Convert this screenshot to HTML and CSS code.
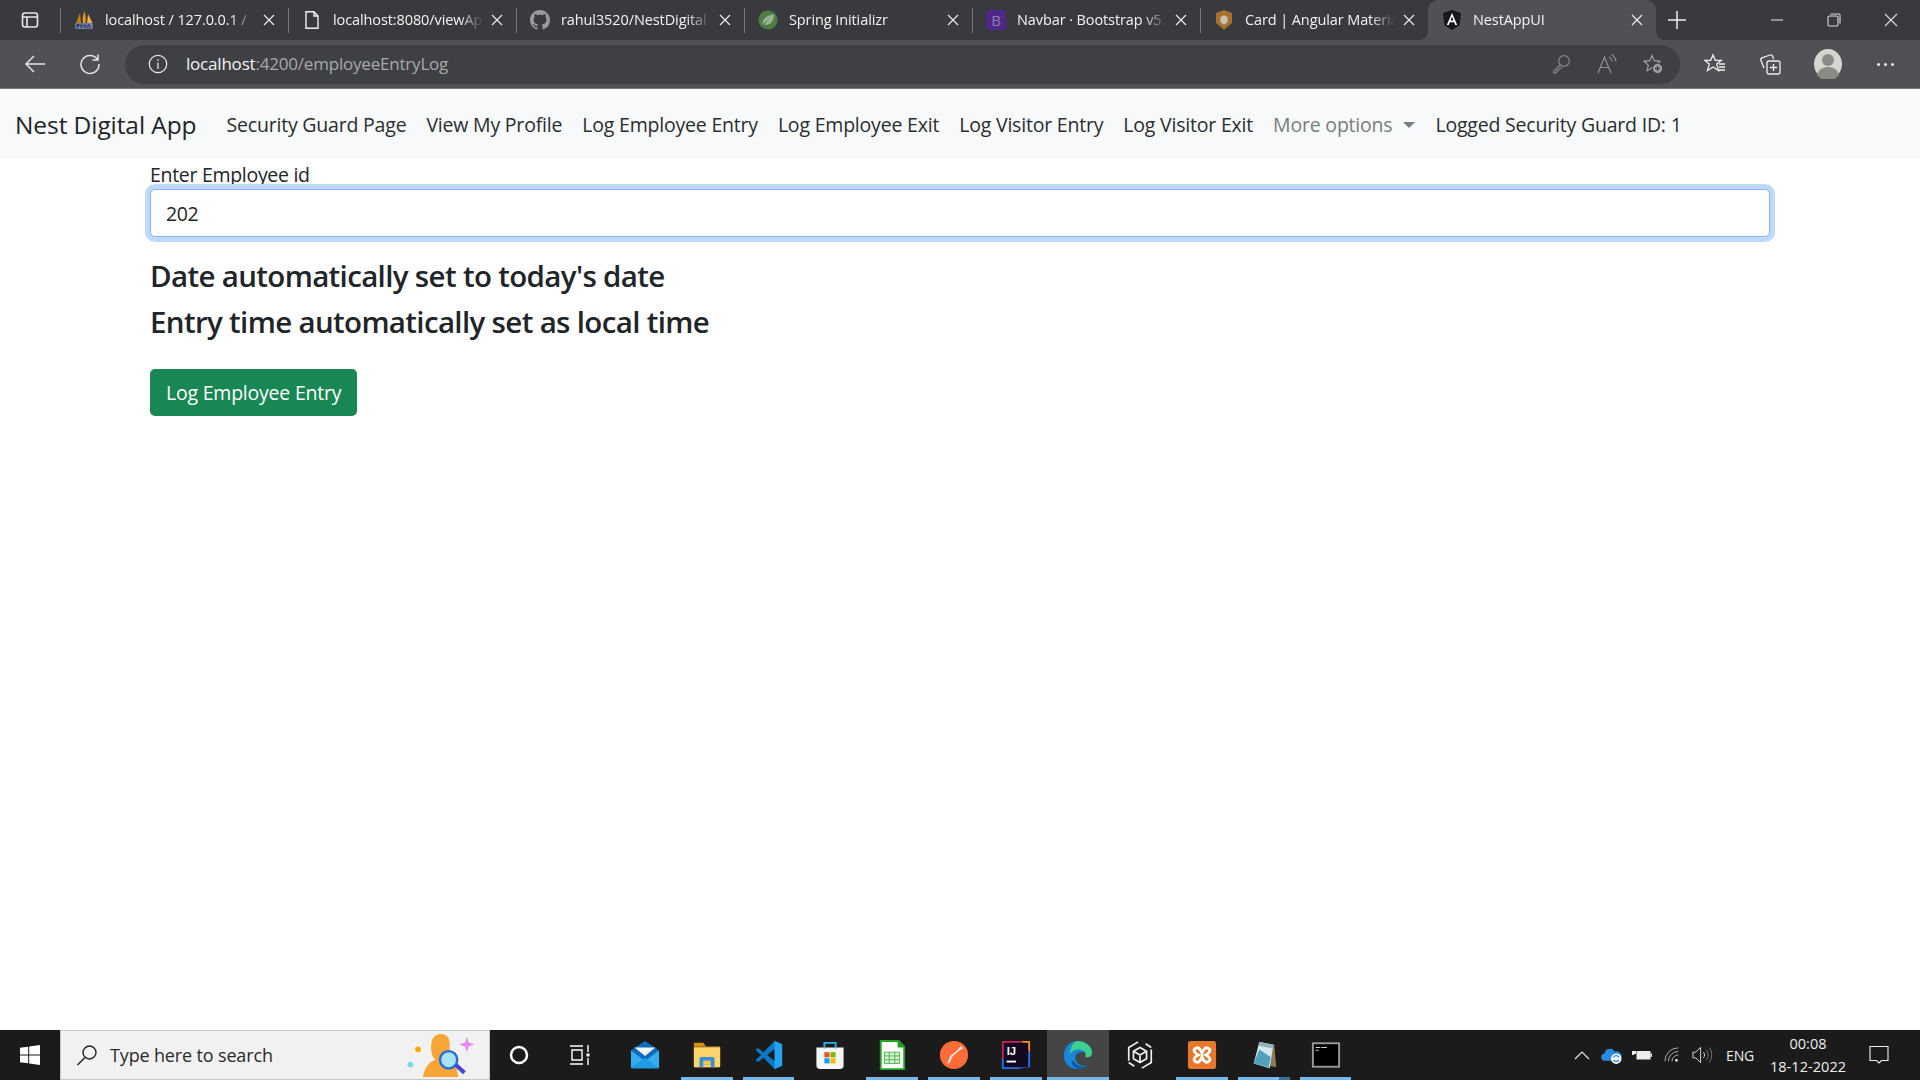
FILE: index.html
```html
<!DOCTYPE html>
<html lang="en">
<head>
<meta charset="utf-8">
<title>NestAppUI</title>
<link rel="stylesheet" href="styles.css">
</head>
<body>
<div class="screen">
  <header class="tabstrip">
    <div class="strip-start">
      <svg class="ic20" viewBox="0 0 20 20" fill="none" stroke="#e8e8e8" stroke-width="1.6"><rect x="2.5" y="3" width="15" height="14" rx="2.5"/><path d="M2.5 7h15M7 7v10"/></svg>
    </div>
    <div class="tab sep">
      <svg class="fav" viewBox="0 0 20 20"><path d="M2 13 6 3l1 10z" fill="#c77d18"/><path d="M7 13 10.500 1 13 13z" fill="#e89a2a"/><path d="M13 13 14 4l4.500 9z" fill="#f2b04a"/><path d="M8 5l1 8H7zM12 4l1 9h-1.500z" fill="#3b3226"/><rect x="1" y="13" width="18" height="6" rx="1" fill="#6c77a3"/><path d="M3 18v-3.500h2V16H3M7 18v-3.500l2 2 2-2V18M13 18l1.500-3.500L16 18" fill="none" stroke="#2d3358" stroke-width="1"/></svg>
      <span class="tab-title">localhost / 127.0.0.1 /</span>
      <svg class="tab-x" viewBox="0 0 12 12"><path d="M1 1l10 10M11 1 1 11"/></svg>
    </div>
    <div class="tab sep">
      <svg class="fav" viewBox="0 0 20 20" fill="none" stroke="#f0f0f0" stroke-width="1.4"><path d="M4 1.700h8l4 4.300v12.300H4zM12 1.700V6h4"/></svg>
      <span class="tab-title">localhost:8080/viewAp</span>
      <svg class="tab-x" viewBox="0 0 12 12"><path d="M1 1l10 10M11 1 1 11"/></svg>
    </div>
    <div class="tab sep">
      <svg class="fav" viewBox="0 0 16 16"><path fill="#9a9a9c" d="M8 0C3.580 0 0 3.580 0 8c0 3.540 2.290 6.530 5.470 7.590.4.070.55-.17.55-.38 0-.19-.01-.82-.01-1.490-2.010.37-2.530-.49-2.690-.94-.09-.23-.48-.94-.82-1.130-.28-.15-.68-.52-.01-.53.63-.01 1.080.58 1.230.82.72 1.210 1.870.87 2.330.66.07-.52.28-.87.51-1.070-1.780-.2-3.640-.89-3.640-3.950 0-.87.31-1.590.82-2.150-.08-.2-.36-1.020.08-2.120 0 0 .67-.21 2.200.82.64-.18 1.320-.27 2-.27s1.360.09 2 .27c1.530-1.040 2.200-.82 2.200-.82.44 1.100.16 1.920.08 2.120.51.56.82 1.270.82 2.150 0 3.070-1.870 3.750-3.650 3.950.29.25.54.73.54 1.480 0 1.070-.01 1.930-.01 2.200 0 .21.15.46.55.38A8.010 8.010 0 0 0 16 8c0-4.420-3.580-8-8-8z"/></svg>
      <span class="tab-title">rahul3520/NestDigital</span>
      <svg class="tab-x" viewBox="0 0 12 12"><path d="M1 1l10 10M11 1 1 11"/></svg>
    </div>
    <div class="tab sep">
      <svg class="fav" viewBox="0 0 20 20"><circle cx="10" cy="10" r="9.500" fill="#4f7d45"/><path d="M4.500 15C4 8 10 5 16 4.500c0 7-4 11-9.500 10.500 1-3 3-5 6-6.500-3 1-5.500 3-8 6.500z" fill="#98b592"/></svg>
      <span class="tab-title">Spring Initializr</span>
      <svg class="tab-x" viewBox="0 0 12 12"><path d="M1 1l10 10M11 1 1 11"/></svg>
    </div>
    <div class="tab sep">
      <span class="fav-b">B</span>
      <span class="tab-title">Navbar · Bootstrap v5.</span>
      <svg class="tab-x" viewBox="0 0 12 12"><path d="M1 1l10 10M11 1 1 11"/></svg>
    </div>
    <div class="tab sep">
      <svg class="fav" viewBox="0 0 20 20"><path d="M10 0l8 3v10l-8 7-8-7V3z" fill="#a8702c"/><path d="M10 5l3.500 2v5L10 15l-3.500-3V7z" fill="#c9c2b4"/></svg>
      <span class="tab-title">Card | Angular Materia</span>
      <svg class="tab-x" viewBox="0 0 12 12"><path d="M1 1l10 10M11 1 1 11"/></svg>
    </div>
    <div class="tab active">
      <svg class="fav" viewBox="0 0 20 20"><path d="M10 0l9 3-1.400 12L10 20l-7.600-5L1 3z" fill="#16171b"/><path d="M10 3 4.800 15h2l1-2.700h4.400l1 2.700h2zM8.500 10.600 10 6.800l1.500 3.800z" fill="#fff"/></svg>
      <span class="tab-title">NestAppUI</span>
      <svg class="tab-x" viewBox="0 0 12 12"><path d="M1 1l10 10M11 1 1 11"/></svg>
    </div>
    <button class="new-tab"><svg class="ic20" viewBox="0 0 20 20" stroke="#eee" stroke-width="1.500"><path d="M10 1v18M1 10h18"/></svg></button>
    <div class="win-controls">
      <svg class="ic14" viewBox="0 0 14 14" stroke="#ddd" stroke-width="1.100" fill="none"><path d="M1 7h12"/></svg>
      <svg class="ic14" viewBox="0 0 14 14" stroke="#ddd" stroke-width="1.100" fill="none"><rect x="1" y="3" width="10" height="10" rx="1.500"/><path d="M3.500 1H12a1 1 0 0 1 1 1v8.500"/></svg>
      <svg class="ic14" viewBox="0 0 14 14" stroke="#ddd" stroke-width="1.100" fill="none"><path d="M1 1l12 12M13 1 1 13"/></svg>
    </div>
  </header>

  <div class="toolbar">
    <svg class="tool-back" viewBox="0 0 22 22" fill="none" stroke="#e6e6e6" stroke-width="1.500"><path d="M21 11H2M10 3l-8 8 8 8"/></svg>
    <svg class="tool-reload" viewBox="0 0 22 22" fill="none" stroke="#e6e6e6" stroke-width="1.500"><path d="M18.500 6.500A9 9 0 1 0 20 11M19 1.500v5.500h-5.500"/></svg>
    <div class="omnibox">
      <svg class="omni-info" viewBox="0 0 20 20" fill="none" stroke="#e8e8e8" stroke-width="1.200"><circle cx="10" cy="10" r="8.700"/><path d="M10 8.500V15M10 5v1.800"/></svg>
      <span class="url"><span class="url-host">localhost</span>:4200/employeeEntryLog</span>
      <div class="omni-actions">
        <svg class="ic20" viewBox="0 0 20 20" fill="none" stroke="#85868a" stroke-width="1.200"><circle cx="13" cy="7" r="5.300"/><path d="M9.300 10.800 2.500 17.500v1.300h2.800l.4-2 2-.4.4-2 2-.4.7-.8M13.500 5.500h.1"/></svg>
        <svg class="ic20" viewBox="0 0 20 20" fill="none" stroke="#909195" stroke-width="1.200"><path d="M1 19 7.500 3 14 19M3.300 13.500h8.400M12 3c1.800.9 2.800 2.500 3.200 4.500M14.500 .5c2.800 1.500 4 4 4.500 7"/></svg>
        <svg class="ic20" viewBox="0 0 20 20" fill="none" stroke="#a0a1a5" stroke-width="1.200"><path d="M9 1.500l2.300 5.200 5.700.6-4.300 3.800 1.300 5.600-5-2.900-5 2.900 1.300-5.600L1 7.300l5.700-.6z"/><circle cx="14.500" cy="14.500" r="5" fill="#a0a1a5" stroke="#3f4044" stroke-width="1"/><path d="M14.500 12v5M12 14.500h5" stroke="#3f4044" stroke-width="1.400"/></svg>
      </div>
    </div>
    <div class="tool-right">
      <svg class="ic22" viewBox="0 0 22 22" fill="none" stroke="#f0f0f0" stroke-width="1.300"><path d="M9 2l2.300 5.300h6l-4.600 3.800 1.800 6.400L9 14l-5.500 3.500 1.800-6.400L.7 7.300h6zM15 11h6M15 14h6M15 17h6"/></svg>
      <svg class="ic22" viewBox="0 0 22 22" fill="none" stroke="#f0f0f0" stroke-width="1.300"><rect x="8" y="8" width="13" height="13" rx="2"/><path d="M14.500 11v7M11 14.500h7M5 15 2 7.500a2 2 0 0 1 1.100-2.600L11 2a2 2 0 0 1 2.500 1l1 3"/></svg>
      <span class="avatar"><svg viewBox="0 0 28 30"><ellipse cx="14" cy="15" rx="14" ry="15" fill="#d7d5d0"/><circle cx="14" cy="11" r="6" fill="#8b8a86"/><path d="M3 26c2-6 6-8 11-8s9 2 11 8a14 15 0 0 1-22 0z" fill="#8b8a86"/></svg></span>
      <span class="dots"><i></i><i></i><i></i></span>
    </div>
  </div>

  <nav class="navbar">
    <a class="brand">Nest Digital App</a>
    <a class="nav-link">Security Guard Page</a>
    <a class="nav-link">View My Profile</a>
    <a class="nav-link">Log Employee Entry</a>
    <a class="nav-link">Log Employee Exit</a>
    <a class="nav-link">Log Visitor Entry</a>
    <a class="nav-link">Log Visitor Exit</a>
    <a class="nav-link muted">More options<span class="caret"></span></a>
    <a class="nav-link">Logged Security Guard ID: 1</a>
  </nav>

  <main class="content">
    <label class="field-label" for="emp">Enter Employee id</label>
    <input class="field" id="emp" type="text" value="202">
    <h4 class="note first">Date automatically set to today's date</h4>
    <h4 class="note">Entry time automatically set as local time</h4>
    <button class="btn-success">Log Employee Entry</button>
  </main>

  <footer class="taskbar">
    <div class="start"><svg viewBox="0 0 20 20" width="20" height="20" fill="#fff"><path d="M0 2.800 8.200 1.700v7.700H0zM9.200 1.500 20 0v9.400H9.200zM0 10.400h8.200v7.900L0 17.200zM9.200 10.400H20V20L9.200 18.500z"/></svg></div>
    <div class="search">
      <svg class="search-ic" viewBox="0 0 22 22" fill="none" stroke="#222" stroke-width="1.400"><circle cx="13.500" cy="8.500" r="6.500"/><path d="M9 13.500 1.500 21"/></svg>
      <span class="search-text">Type here to search</span>
      <svg class="search-art" viewBox="0 0 70 46"><circle cx="11" cy="17" r="3" fill="#ffa800"/><circle cx="3" cy="33" r="3" fill="#7ddbe8"/><path d="M60 10l2-6 2 6 6 2-6 2-2 6-2-6-6-2z" fill="#e58cf0"/><path d="M16 46c2-10 7-16 13-18-4-4-5-10-4-18 1-6 5-9 10-9s9 3 9 10v18c5 3 8 8 9 17z" fill="#f5a636"/><circle cx="43" cy="28" r="9" fill="#a5e4f5" stroke="#2b69d8" stroke-width="2.500"/><path d="M49 35l9 8 3-3-9-8z" fill="#4a45cf"/></svg>
    </div>
    <div class="tb-btn nudge-sm"><svg class="tb-ic" viewBox="0 0 24 24" fill="none" stroke="#fff" stroke-width="2.500"><circle cx="12" cy="12" r="8"/></svg></div>
    <div class="tb-btn nudge"><svg class="tb-ic" viewBox="0 0 24 24" fill="none" stroke="#fff" stroke-width="1.400"><path d="M2 3h13M2 21h13M4 7h10v10H4zM20 2v7M20 15v7"/><rect x="18.500" y="10.500" width="3" height="3" fill="#fff" stroke="none"/></svg></div>
    <div class="tb-btn"><svg class="tb-ic lg" viewBox="0 0 32 32"><path d="M1 11 16 1l15 10-15 11z" fill="#0f6cbd"/><path d="M5 8h22l-11 9z" fill="#f4f6f8"/><path d="M1 11v18a1 1 0 0 0 1 1h28a1 1 0 0 0 1-1V11L16 22z" fill="#35aef0"/><path d="M1 29 16 19l15 11H2z" fill="#1f9be6"/></svg></div>
    <div class="tb-btn on"><svg class="tb-ic lg" viewBox="0 0 32 32"><path d="M2 3h10l3 4h-13z" fill="#d9920f"/><path d="M2 7h28v21a1 1 0 0 1-1 1H3a1 1 0 0 1-1-1z" fill="#c79022"/><path d="M2 8h28v20a1 1 0 0 1-1 1H3a1 1 0 0 1-1-1z" fill="#fbd56c"/><path d="M8 29V20a2 2 0 0 1 2-2h12a2 2 0 0 1 2 2v9h-4v-3h-8v3z" fill="#3a8fd8"/><rect x="12" y="22" width="8" height="4" fill="#f5c94f"/></svg></div>
    <div class="tb-btn on"><svg class="tb-ic lg" viewBox="0 0 32 32"><path fill-rule="evenodd" d="M22 1 10 13 4.500 8.500 1.500 10.500 7.500 16l-6 5.500 3 2L10 19l12 12 8-3.500v-23zM22 9.500v13L14 16z" fill="#0b78c8"/><path fill-rule="evenodd" d="M22 1l8 3.500v23L22 31z" fill="#24a3ee"/></svg></div>
    <div class="tb-btn"><svg class="tb-ic lg" viewBox="0 0 32 32"><path d="M1.500 8h29v19a4 4 0 0 1-4 4h-21a4 4 0 0 1-4-4z" fill="#f5f5f5"/><path d="M10 9V3h12v6" fill="none" stroke="#2bb3ec" stroke-width="2"/><rect x="10" y="13" width="5.500" height="5.500" fill="#f25022"/><rect x="16.500" y="13" width="5.500" height="5.500" fill="#7fba00"/><rect x="10" y="19.500" width="5.500" height="5.500" fill="#00a4ef"/><rect x="16.500" y="19.500" width="5.500" height="5.500" fill="#ffb900"/></svg></div>
    <div class="tb-btn on"><svg class="tb-ic lg" viewBox="0 0 32 32"><path d="M4 1h19l6 6v24H4z" fill="#fff" stroke="#22a322" stroke-width="2"/><path d="M22 0l8 8h-8z" fill="#1f9e1f"/><path d="M8 13h16v12H8zM8 17h16M8 21h16M13 13v12M19 13v12" fill="#d8f0d8" stroke="#49b849" stroke-width="1"/></svg></div>
    <div class="tb-btn on"><svg class="tb-ic lg" viewBox="0 0 32 32"><circle cx="16" cy="16" r="15" fill="#ff6c37"/><path d="M23 6.500a2.200 2.200 0 0 1 2 3l-2.500 1-8 7-3 6.500-3 1.500 3.500-8.500 8-6.500z" fill="#fbe3d8"/></svg></div>
    <div class="tb-btn on"><svg class="tb-ic lg" viewBox="0 0 32 32"><path d="M1 1h20L31 8v10L20 31H1z" fill="#c5225d"/><path d="M1 20 1 31h12l18-2V12z" fill="#2371e8"/><path d="M22 1h9v12z" fill="#f58b2b"/><rect x="3" y="3" width="26" height="26" fill="#130a1f"/><text x="6" y="16" class="ij">IJ</text><rect x="6" y="22" width="10" height="2" fill="#fff"/></svg></div>
    <div class="tb-btn on cur"><svg class="tb-ic lg" viewBox="0 0 32 32"><path d="M16 1C7 1 1 8 1 16s5 15 14 15c5 0 9-2 11-4-4 1-10 0-12-5-2-4 0-9 5-9h12C31 7 24 1 16 1z" fill="#1687d9"/><path d="M16 1c8 0 15 6 15 13 0 4-4 5-7 4 1-4-1-8-7-8-5 0-8 2-10 5C8 7 11 1 16 1z" fill="#3ecf8e"/><path d="M12 23c2 5 8 7 14 4-6 6-16 4-17-5z" fill="#0b559f"/></svg></div>
    <div class="tb-btn"><svg class="tb-ic lg" viewBox="0 0 32 32" fill="none" stroke="#f0f0f0" stroke-width="1.800"><path d="M14 2 4 8v14M18 30l10-6V10M22 4l6 4M10 28l-6-4M16 8l7 4v8l-7 4-7-4v-8zM9 12l7 4 7-4M16 16v8"/></svg></div>
    <div class="tb-btn on"><svg class="tb-ic lg" viewBox="0 0 32 32"><rect x="1" y="1" width="30" height="30" rx="3" fill="#e8762b"/><path d="M9 9c3-2 5 0 7 5 2-5 4-7 7-5 3 2 1 5-3 7 4 2 6 5 3 7-3 2-5 0-7-5-2 5-4 7-7 5-3-2-1-5 3-7-4-2-6-5-3-7z" fill="none" stroke="#fff" stroke-width="3"/></svg></div>
    <div class="tb-btn on stacked"><svg class="tb-ic lg" viewBox="0 0 32 32"><path d="M11 2l16 3 2 24-6-1z" fill="#8c7a52"/><path d="M11 2l15 3-4 25-17-5z" fill="#d5e9ef"/><path d="M11 2l15 3-1 4-15-3z" fill="#95afb9"/><path d="M5 25 11 10l12 8-2 11z" fill="#4fa0b8"/></svg></div>
    <div class="tb-btn on"><svg class="tb-ic lg" viewBox="0 0 32 32"><rect x="2" y="3.500" width="28" height="25" fill="#000" stroke="#9a9a9a" stroke-width="2"/><path d="M5 8h5M11 8h6M5 11h3" stroke="#ddd" stroke-width="1"/></svg></div>
    <div class="tray">
      <svg class="tray-chev" viewBox="0 0 16 10" fill="none" stroke="#e8e8e8" stroke-width="1.200"><path d="M1 9l7-7 7 7"/></svg>
      <svg class="tray-cloud" viewBox="0 0 20 16"><path d="M4 13a3.500 3.500 0 0 1-.5-7A5 5 0 0 1 13 4.500 4 4 0 0 1 17 13z" fill="#2a8ae0"/><circle cx="14.500" cy="11" r="5" fill="#fff"/><path d="M12 10a2.600 2.600 0 0 1 5 0M17 12a2.600 2.600 0 0 1-5 0" stroke="#2a8ae0" stroke-width="1.300" fill="none"/></svg>
      <svg class="tray-batt" viewBox="0 0 20 12"><rect x="4.500" y="2" width="14" height="8.500" fill="#eee"/><rect x="18.500" y="4.500" width="1.500" height="3.500" fill="#eee"/><path d="M0 2h4v3H2v1H0z" fill="#eee"/></svg>
      <svg class="tray-wifi" viewBox="0 0 18 18" fill="none" stroke="#bbb" stroke-width="1"><path d="M1 16A15 15 0 0 1 16 1M5 16A11 11 0 0 1 16 5M9 16a7 7 0 0 1 7-7"/><circle cx="14" cy="15" r="1.500" fill="#eee" stroke="none"/></svg>
      <svg class="tray-vol" viewBox="0 0 22 20" fill="none" stroke="#ddd" stroke-width="1"><path d="M1 7h3l5-5v16l-5-5H1zM12 7c1.500 2 1.500 4 0 6"/><path d="M15 4.500c2.500 3 2.500 8 0 11M18 2c3.500 4.500 3.500 11.500 0 16" stroke="#777"/></svg>
      <span class="tray-lang">ENG</span>
      <span class="clock"><span>00:08</span><span>18-12-2022</span></span>
      <svg class="tray-note" viewBox="0 0 20 20" fill="none" stroke="#f0f0f0" stroke-width="1.100"><path d="M1 1.500h18v14h-6.500L10 18l-2.500-2.500H1z"/></svg>
    </div>
  </footer>
</div>
</body>
</html>
```

FILE: styles.css
```css
* { box-sizing: border-box; }
html, body { margin: 0; padding: 0; }
body { font-family: "Open Sans", "Noto Sans", sans-serif; color: #212529; background: #fff; }
.screen { display: flex; flex-direction: column; width: 1920px; height: 1080px; overflow: hidden; }

.ic14 { width: 14px; height: 14px; display: block; }
.ic20 { width: 20px; height: 20px; display: block; }
.ic22 { width: 22px; height: 22px; display: block; }

/* tab strip */
.tabstrip { display: flex; align-items: center; height: 40px; flex: none; background: #393a3e; color: #f2f2f2; }
.strip-start { width: 60px; display: flex; justify-content: center; flex: none; }
.tab { position: relative; display: flex; align-items: center; flex: none; width: 228px; height: 40px; padding: 0 13px; font-size: 14.500px; letter-spacing: -.1px; }
.tab.sep::before { content: ""; position: absolute; left: 0; top: 8px; height: 25px; width: 1px; background: #77787b; }
.tab.active { background: #505155; border-radius: 10px 10px 0 0; }
.tab.active::before, .tab.active::after { content: ""; position: absolute; bottom: 0; width: 8px; height: 8px; }
.tab.active::before { left: -8px; background: radial-gradient(circle at 0 0, transparent 7.500px, #505155 8px); }
.tab.active::after { right: -8px; background: radial-gradient(circle at 100% 0, transparent 7.500px, #505155 8px); }
.fav { width: 20px; height: 20px; flex: none; display: block; margin-left: 1px; }
.fav-b { width: 20px; height: 20px; flex: none; margin-left: 1px; background: #4c2889; border-radius: 3px; color: #8f7fb5; font-size: 15px; line-height: 20px; text-align: center; }
.tab-title { flex: 1; min-width: 0; margin: 0 8px 0 11px; padding-bottom: 2px; white-space: nowrap; overflow: hidden; -webkit-mask-image: linear-gradient(90deg, #000 84%, transparent 100%); mask-image: linear-gradient(90deg, #000 84%, transparent 100%); }
.tab-x { flex: none; width: 12px; height: 12px; fill: none; stroke: #f0f0f0; stroke-width: 1.100; }
.new-tab { width: 42px; height: 40px; border: 0; background: none; display: flex; align-items: center; justify-content: center; padding: 0; flex: none; }
.win-controls { margin-left: auto; display: flex; align-items: center; gap: 43px; padding-right: 22px; }

/* toolbar */
.toolbar { display: flex; align-items: center; height: 49px; flex: none; background: #505155; border-bottom: 1px solid #7a7b7e; padding: 0 0 0 24px; }
.tool-back { width: 22px; height: 22px; flex: none; }
.tool-reload { width: 22px; height: 22px; margin-left: 33px; flex: none; }
.omnibox { display: flex; align-items: center; margin-left: 24px; width: 1555px; height: 39px; background: #3f4044; border-radius: 20px; padding: 0 14px 0 23px; flex: none; }
.omni-info { width: 20px; height: 20px; flex: none; }
.url { margin-left: 18px; padding-bottom: 2px; font-size: 17px; letter-spacing: -.2px; color: #a8a9ac; white-space: nowrap; }
.url-host { color: #f4f4f4; }
.omni-actions { margin-left: auto; display: flex; align-items: center; gap: 26px; padding-right: 3px; }
.tool-right { display: flex; align-items: center; flex: 1; padding-left: 24px; gap: 33px; }
.avatar { display: block; width: 28px; height: 30px; }
.avatar svg { display: block; width: 28px; height: 30px; }
.dots { display: flex; gap: 4px; margin-left: 2px; }
.dots i { width: 3px; height: 3px; border-radius: 50%; background: #eee; display: block; }

/* page navbar */
.navbar { display: flex; align-items: center; height: 70px; flex: none; background: #f8f9fa; padding-left: 15px; font-size: 19.500px; letter-spacing: -.2px; }
.brand { font-size: 24.500px; letter-spacing: -.08px; color: #212529; margin-right: 20px; white-space: nowrap; }
.nav-link { padding: 0 10px; color: #2a2d31; white-space: nowrap; }
.nav-link.muted { color: #7a7d80; }
.caret { display: inline-block; margin-left: 11px; vertical-align: 4px; border-top: 6px solid #7a7d80; border-left: 6px solid transparent; border-right: 6px solid transparent; }

/* main form */
.content { flex: 1; min-height: 0; display: flex; flex-direction: column; align-items: flex-start; padding: 1px 150px 0; background: #fff; }
.field-label { font-size: 19.500px; line-height: 29px; letter-spacing: -.3px; color: #212529; }
.field { width: 100%; height: 47.500px; padding: 2px 15px 0; border: 1px solid #86b7fe; border-radius: 5px; font: 19.500px "Open Sans", sans-serif; letter-spacing: -.38px; color: #212529; background: #fff; box-shadow: 0 0 0 5px #bfd9fd; outline: 0; }
.note { margin: 0 0 10px; font-size: 29.500px; line-height: 36px; font-weight: 600; letter-spacing: -.66px; color: #212529; white-space: nowrap; }
.note.first { margin-top: 21px; }
.btn-success { margin-top: 19px; height: 47.500px; padding: 0 16px; border: 0; border-radius: 5px; background: #198754; color: #fff; font: 19.500px "Open Sans", sans-serif; letter-spacing: -.22px; white-space: nowrap; }

/* taskbar */
.taskbar { display: flex; align-items: stretch; height: 50px; flex: none; background: #1b1b1b; color: #f0f0f0; }
.start { width: 60px; display: flex; align-items: center; justify-content: center; flex: none; }
.search { width: 430px; display: flex; align-items: center; background: #f1f1f1; border: 1px solid #c6c6c6; padding-left: 15px; flex: none; color: #2b2b2b; }
.search-ic { width: 22px; height: 22px; flex: none; }
.search-text { margin-left: 12px; font-size: 18px; letter-spacing: -.15px; white-space: nowrap; }
.search-art { width: 68px; height: 44px; margin-left: auto; margin-right: 14px; flex: none; }
.tb-btn { position: relative; width: 61.900px; flex: none; display: flex; align-items: center; justify-content: center; }
.tb-btn.nudge { padding-right: 6px; }
.tb-btn.nudge-sm { padding-right: 3px; }
.tb-ic { width: 24px; height: 24px; display: block; }
.tb-ic.lg { width: 30px; height: 30px; }
.tb-btn.cur { background: #454545; }
.tb-btn.on::after { content: ""; position: absolute; left: 5px; right: 5px; bottom: 0; height: 3px; background: #76b9ed; }
.tb-btn.cur::after { left: 0; right: 0; }
.tb-btn.stacked::after { background: linear-gradient(90deg, #76b9ed 78%, #3f6f97 78%); }
.ij { font: 700 12px "Liberation Sans", sans-serif; fill: #fff; }
.tray { flex: 1; display: flex; align-items: center; justify-content: flex-end; font-size: 14px; color: #eee; padding-right: 31px; }
.tray-chev { width: 16px; height: 10px; }
.tray-cloud { width: 21px; height: 17px; margin-left: 11px; }
.tray-batt { width: 20px; height: 12px; margin-left: 10px; }
.tray-wifi { width: 16px; height: 16px; margin-left: 12px; }
.tray-vol { width: 21px; height: 20px; margin-left: 12px; }
.tray-lang { margin-left: 13px; letter-spacing: -.2px; }
.clock { display: flex; flex-direction: column; align-items: center; line-height: 23px; margin-left: 15px; width: 78px; letter-spacing: .05px; font-size: 14.500px; }
.tray-note { width: 20px; height: 20px; margin-left: 22px; }
```
